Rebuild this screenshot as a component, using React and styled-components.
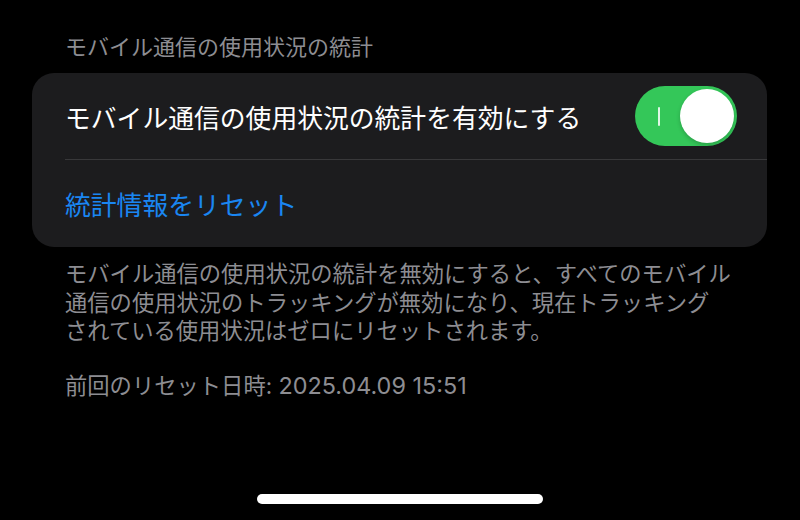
import React, { useState } from 'react';
import styled, { createGlobalStyle } from 'styled-components';

const GlobalStyle = createGlobalStyle`
  html, body {
    margin: 0;
    padding: 0;
    background: #000;
  }
  body {
    font-family: Inter, "Noto Sans CJK JP", "Noto Sans", sans-serif;
    -webkit-font-smoothing: antialiased;
  }
`;

const Page = styled.div`
  height: 520px;
  box-sizing: border-box;
  padding: 32px 33px 0 32px;
  display: flex;
  flex-direction: column;
  background: #000;
  overflow: hidden;
`;

const SectionHeader = styled.div`
  padding-left: 33px;
  font-size: 22px;
  line-height: 30px;
  color: #8d8d92;
  margin-bottom: 11px;
`;

const Card = styled.div`
  background: #1c1c1e;
  border-radius: 22px;
  overflow: hidden;
`;

const Row = styled.div`
  padding-left: 33px;
`;

// separator is inset from the left, so it sits on the inner box
const RowInner = styled.div`
  height: 87px;
  display: flex;
  align-items: center;
  justify-content: space-between;
  padding-right: 30px;
  border-bottom: ${props => (props.divider ? '1px solid #38383a' : 'none')};
  box-sizing: border-box;
`;

const Label = styled.span`
  font-size: 25.8px;
  color: ${props => (props.action ? '#1a86f2' : '#fff')};
  cursor: ${props => (props.action ? 'pointer' : 'default')};
`;

const Switch = styled.button`
  width: 102px;
  height: 60px;
  border: none;
  border-radius: 30px;
  padding: 0 3px 0 23px;
  display: flex;
  align-items: center;
  justify-content: space-between;
  background: ${props => (props.on ? '#34c759' : '#39393d')};
  cursor: pointer;
  box-sizing: border-box;
`;

const OnMark = styled.span`
  width: 2px;
  height: 19px;
  background: rgba(255, 255, 255, 0.85);
  border-radius: 1px;
  visibility: ${props => (props.on ? 'visible' : 'hidden')};
`;

const Knob = styled.span`
  width: 54px;
  height: 54px;
  border-radius: 50%;
  background: #fff;
  box-shadow: 0 2px 4px rgba(0, 0, 0, 0.2);
`;

const Footer = styled.div`
  margin-top: 13px;
  padding-left: 33px;
  font-size: 22.3px;
  line-height: 28.5px;
  color: #8d8d92;
`;

const Paragraph = styled.p`
  margin: 0;
  white-space: nowrap;
  & + & {
    margin-top: 26px;
  }
`;

const DateValue = styled.span`
  font-size: 23.4px;
`;

const HomeIndicator = styled.div`
  margin: auto auto 16px;
  width: 286px;
  height: 10px;
  border-radius: 5px;
  background: #fff;
  flex-shrink: 0;
`;

export default function App() {
  const [enabled, setEnabled] = useState(true);

  return (
    <>
      <GlobalStyle />
      <Page>
        <SectionHeader>モバイル通信の使用状況の統計</SectionHeader>
        <Card>
          <Row>
            <RowInner divider>
              <Label>モバイル通信の使用状況の統計を有効にする</Label>
              <Switch on={enabled ? 1 : 0} onClick={() => setEnabled(!enabled)}>
                <OnMark on={enabled ? 1 : 0} />
                <Knob />
              </Switch>
            </RowInner>
          </Row>
          <Row>
            <RowInner>
              <Label action>統計情報をリセット</Label>
            </RowInner>
          </Row>
        </Card>
        <Footer>
          <Paragraph>
            モバイル通信の使用状況の統計を無効にすると、すべてのモバイル
            <br />
            通信の使用状況のトラッキングが無効になり、現在トラッキング
            <br />
            されている使用状況はゼロにリセットされます。
          </Paragraph>
          <Paragraph>
            前回のリセット日時: <DateValue>2025.04.09 15:51</DateValue>
          </Paragraph>
        </Footer>
        <HomeIndicator />
      </Page>
    </>
  );
}
